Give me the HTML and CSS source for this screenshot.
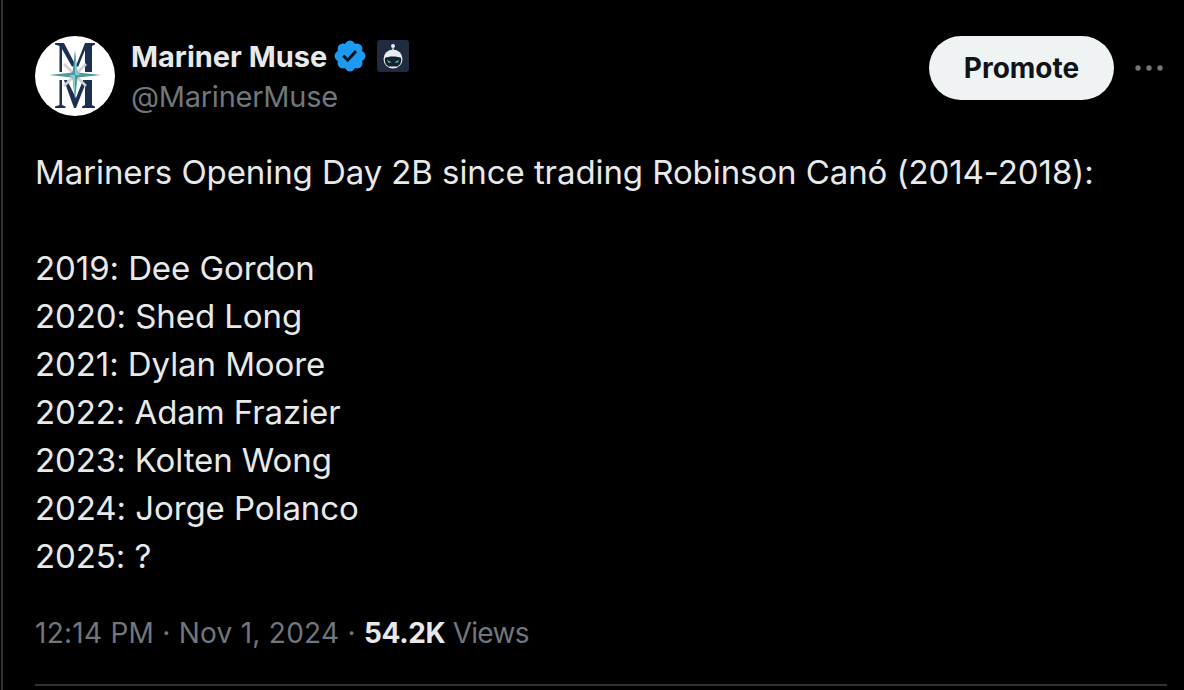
FILE: index.html
```html
<!DOCTYPE html>
<html lang="en">
<head>
<meta charset="utf-8">
<title>Mariner Muse</title>
<link rel="stylesheet" href="styles.css">
</head>
<body>
<main class="tweet">
  <header class="head">
    <svg class="avatar" viewBox="0 0 80 80" aria-hidden="true">
      <circle cx="40" cy="40" r="40" fill="#fff"/>
      <g fill="#1b2f55">
        <path d="M20 7h9l12 23 9-23h10v1.500l-3 1.500v26h-7V14L41 36h-1L27 13v23h-2.500V10L20 8.500z"/>
        <path d="M24.500 44H27v25l3.500 1.500V72H20v-1.500l4.500-1.500zM29 44h3l9 18 7-18h9v25l3 1.500V72H47v-1.500l3-1.500V49L41 72h-2z"/>
      </g>
      <circle cx="40" cy="39" r="9" fill="#fff"/>
      <path d="M29 28l22 22M51 28L29 50" stroke="#d5cfd2" stroke-width="2.500" fill="none"/>
      <path d="M40 14l2.500 22.500L66 39l-23.500 2.500L40 64l-2.500-22.500L14 39l23.500-2.500z" fill="#4a9aa3"/>
      <path d="M40 20l2.500 16.500L46 39h-6zM40 58l-2.500-16.500L34 39h6z" fill="#86cfd0"/>
    </svg>
    <div class="names">
      <div class="name-row">
        <span class="name">Mariner Muse</span>
        <svg class="verified" viewBox="0 0 22 22" aria-hidden="true">
          <path fill="#1d9bf0" d="M20.396 11c-.018-.646-.215-1.275-.57-1.816-.354-.54-.852-.972-1.438-1.246.223-.607.27-1.264.14-1.897-.131-.634-.437-1.218-.882-1.687-.47-.445-1.053-.75-1.687-.882-.633-.13-1.29-.083-1.897.14-.273-.587-.704-1.086-1.245-1.44S11.647 1.62 11 1.604c-.646.017-1.273.213-1.813.568s-.969.854-1.24 1.44c-.608-.223-1.267-.272-1.902-.14-.635.13-1.22.436-1.69.882-.445.47-.749 1.055-.878 1.688-.13.633-.08 1.29.144 1.896-.587.274-1.087.705-1.443 1.245-.356.54-.555 1.17-.574 1.817.02.647.218 1.276.574 1.817.356.54.856.972 1.443 1.245-.224.606-.274 1.263-.144 1.896.13.634.433 1.218.877 1.688.47.443 1.054.747 1.687.878.633.132 1.29.084 1.897-.136.274.586.705 1.084 1.246 1.439.54.354 1.17.551 1.816.569.647-.016 1.276-.213 1.817-.567s.972-.854 1.245-1.44c.604.239 1.266.296 1.903.164.636-.132 1.22-.447 1.68-.907.46-.46.776-1.044.908-1.681s.075-1.299-.165-1.903c.586-.274 1.084-.705 1.439-1.246.354-.54.551-1.17.569-1.816z"/>
          <path fill="#0b1622" d="M9.662 14.850l-3.429-3.428 1.293-1.302 2.072 2.072 4.400-4.794 1.347 1.246z"/>
        </svg>
        <svg class="badge" viewBox="0 0 32 32" aria-hidden="true">
          <rect width="32" height="32" rx="3" fill="#1f2c3f"/>
          <circle cx="16" cy="6" r="2" fill="#e8edf2"/>
          <rect x="15.400" y="7.500" width="1.200" height="3" fill="#e8edf2"/>
          <circle cx="16" cy="19" r="9.500" fill="#e8edf2"/>
          <path d="M8 18c3-2 13-2 16 0 .8 4-1 7-3.500 8.500h-9C9 25 7.200 22 8 18z" fill="#17202e"/>
          <path d="M10 20l4.500 2.200-3 .6zM22 20l-4.500 2.200 3 .6z" fill="#3fd6c8"/>
        </svg>
      </div>
      <div class="handle">@MarinerMuse</div>
    </div>
    <div class="actions">
      <button class="promote" type="button">Promote</button>
      <svg class="more" viewBox="0 0 28 8" aria-hidden="true">
        <circle cx="3" cy="4" r="2.700"/>
        <circle cx="14" cy="4" r="2.700"/>
        <circle cx="25" cy="4" r="2.700"/>
      </svg>
    </div>
  </header>
  <p class="text">Mariners Opening Day 2B since trading Robinson Canó (2014-2018):

2019: Dee Gordon
2020: Shed Long
2021: Dylan Moore
2022: Adam Frazier
2023: Kolten Wong
2024: Jorge Polanco
2025: ?</p>
  <footer class="meta"><span class="date">12:14 PM · Nov 1, 2024 · </span><strong class="views-count">54.2K</strong><span class="views"> Views</span></footer>
  <div class="rule"></div>
</main>
</body>
</html>
```
FILE: styles.css
```css
* {
  box-sizing: border-box;
}
html,
body {
  margin: 0;
  height: 690px;
  overflow: hidden;
  background: #000;
}
body {
  font-family: Inter, "Liberation Sans", sans-serif;
  color: #e7e9ea;
}
.tweet {
  height: 690px;
  margin-left: 1px;
  border-left: 2px solid #2f3336;
  padding: 36px 17px 0 32px;
}
.head {
  display: flex;
  align-items: flex-start;
  height: 80px;
}
.avatar {
  width: 80px;
  height: 80px;
  flex: none;
}
.names {
  margin-left: 16px;
  flex: 1;
  padding-top: 1px;
}
.name-row {
  display: flex;
  align-items: center;
  height: 38px;
}
.name {
  font-size: 29px;
  font-weight: 700;
}
.verified {
  width: 36px;
  height: 36px;
  margin-left: 5px;
}
.badge {
  width: 32px;
  height: 32px;
  margin-left: 9px;
}
.handle {
  margin-top: 3px;
  font-size: 29px;
  line-height: 38px;
  color: #71767b;
  letter-spacing: -0.25px;
}
.actions {
  display: flex;
  align-items: center;
  height: 64px;
}
.promote {
  width: 185px;
  height: 64px;
  border: 0;
  border-radius: 32px;
  background: #eff3f4;
  color: #0f1419;
  font: 700 28px Inter, "Liberation Sans", sans-serif;
}
.more {
  width: 28px;
  height: 8px;
  margin: 0 4px 0 21px;
  fill: #71767b;
}
.text {
  margin: 32px 0 0;
  font-size: 33px;
  line-height: 48px;
  letter-spacing: -0.08px;
  white-space: pre-line;
}
.meta {
  margin-top: 33px;
  font-size: 28px;
  line-height: 40px;
  color: #71767b;
  white-space: pre-wrap;
}
.date {
  letter-spacing: 0.26px;
}
.views {
  letter-spacing: -0.7px;
}
.views-count {
  color: #e7e9ea;
  font-weight: 700;
  letter-spacing: -0.3px;
}
.rule {
  height: 2px;
  margin-top: 31px;
  background: #2f3336;
}
```
